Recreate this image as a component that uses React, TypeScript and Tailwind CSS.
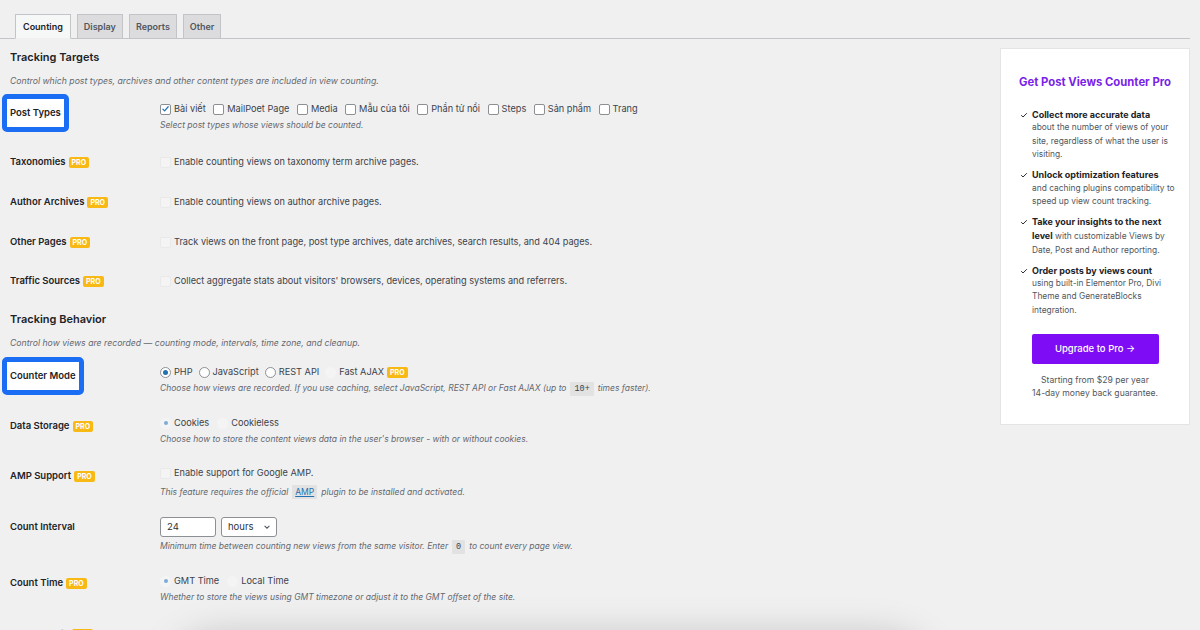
import type { ReactNode } from 'react';

const font = { fontFamily: 'Inter, "Noto Sans", sans-serif' };

const tabs = ['Counting', 'Display', 'Reports', 'Other'];

const postTypes = ['Bài viết', 'MailPoet Page', 'Media', 'Mẫu của tôi', 'Phần tử nổi', 'Steps', 'Sản phẩm', 'Trang'];

// block: the bold lead sits on its own line in the reference
const perks = [
  { strong: 'Collect more accurate data', rest: 'about the number of views of your site, regardless of what the user is visiting.', block: true },
  { strong: 'Unlock optimization features', rest: 'and caching plugins compatibility to speed up view count tracking.', block: true },
  { strong: 'Take your insights to the next level', rest: ' with customizable Views by Date, Post and Author reporting.', block: false },
  { strong: 'Order posts by views count', rest: 'using built-in Elementor Pro, Divi Theme and GenerateBlocks integration.', block: true }
];

function Pro() {
  return (
    <span className="ml-[3px] inline-block rounded-[2px] bg-[#f9b915] px-[3px] text-[7px] font-bold leading-[11px] text-white">
      PRO
    </span>
  );
}

function Checkbox({ checked, disabled }: { checked?: boolean; disabled?: boolean }) {
  if (disabled) {
    return <span className="inline-block size-[11px] shrink-0 rounded-[2px] border border-[#e9e9ea] bg-[#f4f4f5]" />;
  }
  return (
    <span className="inline-flex size-[11px] shrink-0 items-center justify-center rounded-[2px] border border-[#8c8f94] bg-white">
      {checked && (
        <svg viewBox="0 0 12 12" className="size-[10px]">
          <path d="M2.5 6.2l2.3 2.4L9.6 3" fill="none" stroke="#2271b1" strokeWidth="1.6" strokeLinecap="round" strokeLinejoin="round" />
        </svg>
      )}
    </span>
  );
}

function Radio({ checked, disabled }: { checked?: boolean; disabled?: boolean }) {
  if (disabled) {
    return (
      <span className="inline-flex size-[11px] shrink-0 items-center justify-center rounded-full bg-[#f4f4f5]">
        {checked && <span className="size-[4px] rounded-full bg-[#7eaad6]" />}
      </span>
    );
  }
  return (
    <span className="inline-flex size-[11px] shrink-0 items-center justify-center rounded-full border border-[#8c8f94] bg-white">
      {checked && <span className="size-[5px] rounded-full bg-[#2271b1]" />}
    </span>
  );
}

function Desc({ children }: { children: ReactNode }) {
  return <p className="mt-[3px] text-[8.5px] italic leading-[12px] text-[#646970]">{children}</p>;
}

function Code({ children }: { children: ReactNode }) {
  return (
    <code className="mx-[4px] rounded-[1px] bg-[#e2e2e3] px-[4px] py-[2px] font-['Liberation_Mono',monospace] text-[8.5px] not-italic text-[#3c434a]">
      {children}
    </code>
  );
}

function Label({ children, pro, boxed }: { children: ReactNode; pro?: boolean; boxed?: boolean }) {
  if (boxed) {
    return (
      <div className="-ml-[8px] -mt-[8px] flex w-fit rounded-[5px] border-[5px] border-[#1b6ef3] bg-white px-[3px] py-[7px] text-[9.5px] font-semibold leading-[14px] text-[#1d2327]">
        {children}
      </div>
    );
  }
  return (
    <div className="flex items-center text-[9.5px] font-semibold leading-[14px] text-[#1d2327]">
      {children}
      {pro && <Pro />}
    </div>
  );
}

function Row({ label, height, children }: { label: ReactNode; height: string; children: ReactNode }) {
  return (
    <div className={`grid grid-cols-[150px_1fr] items-start ${height}`}>
      <div>{label}</div>
      <div className="text-[9.2px] leading-[14px] text-[#3c434a]">{children}</div>
    </div>
  );
}

function Choice({ children, control }: { children: ReactNode; control: ReactNode }) {
  return (
    <span className="inline-flex items-center gap-[3px]">
      {control}
      <span>{children}</span>
    </span>
  );
}

export default function App() {
  return (
    <div style={font} className="relative h-[630px] w-[1200px] overflow-hidden bg-[#f0f0f1]">
      <nav className="mr-[10px] flex items-end gap-[6px] border-b border-[#c3c4c7] pl-[15px] pt-[14px]">
        {tabs.map((t, i) => (
          <div
            key={t}
            className={
              i === 0
                ? '-mb-px border border-b-[#f0f0f1] border-[#c3c4c7] bg-[#f6f7f7] px-[7px] text-[9px] font-semibold leading-[23px] text-[#1d2327]'
                : 'border border-b-0 border-[#c3c4c7] bg-[#dcdcde] px-[6px] text-[9px] font-semibold leading-[23px] text-[#50575e]'
            }
          >
            {t}
          </div>
        ))}
      </nav>

      <div className="flex pr-[10px]">
        <main className="flex-1 pl-[10px]">
          <h2 className="mt-[10px] text-[11px] font-semibold leading-[16px] text-[#1d2327]">Tracking Targets</h2>
          <p className="mt-[10px] text-[8.7px] italic leading-[12px] text-[#646970]">
            Control which post types, archives and other content types are included in view counting.
          </p>

          <div className="mt-[15px]">
            <Row height="h-[53px]" label={<Label boxed>Post Types</Label>}>
              <div className="flex items-center gap-[7.5px]">
                {postTypes.map((p, i) => (
                  <Choice key={p} control={<Checkbox checked={i === 0} />}>
                    {p}
                  </Choice>
                ))}
              </div>
              <Desc>Select post types whose views should be counted.</Desc>
            </Row>
            <Row height="h-[40px]" label={<Label pro>Taxonomies</Label>}>
              <Choice control={<Checkbox disabled />}>Enable counting views on taxonomy term archive pages.</Choice>
            </Row>
            <Row height="h-[40px]" label={<Label pro>Author Archives</Label>}>
              <Choice control={<Checkbox disabled />}>Enable counting views on author archive pages.</Choice>
            </Row>
            <Row height="h-[39px]" label={<Label pro>Other Pages</Label>}>
              <Choice control={<Checkbox disabled />}>
                Track views on the front page, post type archives, date archives, search results, and 404 pages.
              </Choice>
            </Row>
            <Row height="h-[37px]" label={<Label pro>Traffic Sources</Label>}>
              <Choice control={<Checkbox disabled />}>
                Collect aggregate stats about visitors' browsers, devices, operating systems and referrers.
              </Choice>
            </Row>
          </div>

          <h2 className="text-[11px] font-semibold leading-[16px] text-[#1d2327]">Tracking Behavior</h2>
          <p className="mt-[10px] text-[8.7px] italic leading-[12px] text-[#646970]">
            Control how views are recorded — counting mode, intervals, time zone, and cleanup.
          </p>

          <div className="mt-[16px]">
            <Row height="h-[51px]" label={<Label boxed>Counter Mode</Label>}>
              <div className="flex items-center gap-[6px]">
                <Choice control={<Radio checked />}>PHP</Choice>
                <Choice control={<Radio />}>JavaScript</Choice>
                <Choice control={<Radio />}>REST API</Choice>
                <Choice control={<Radio disabled />}>
                  Fast AJAX
                  <Pro />
                </Choice>
              </div>
              <Desc>
                Choose how views are recorded. If you use caching, select JavaScript, REST API or Fast AJAX (up to
                <Code>10+</Code>
                times faster).
              </Desc>
            </Row>
            <Row
              height="h-[50px]"
              label={
                <div className="pt-[3px]">
                  <Label pro>Data Storage</Label>
                </div>
              }
            >
              <div className="flex items-center gap-[8px]">
                <Choice control={<Radio checked disabled />}>Cookies</Choice>
                <Choice control={<Radio disabled />}>Cookieless</Choice>
              </div>
              <Desc>Choose how to store the content views data in the user's browser - with or without cookies.</Desc>
            </Row>
            <Row
              height="h-[51px]"
              label={
                <div className="pt-[3px]">
                  <Label pro>AMP Support</Label>
                </div>
              }
            >
              <Choice control={<Checkbox disabled />}>Enable support for Google AMP.</Choice>
              <Desc>
                This feature requires the official
                <span className="mx-[4px] bg-[#e2e2e3] px-[3px] py-[2px] not-italic text-[#2271b1] underline">AMP</span>
                plugin to be installed and activated.
              </Desc>
            </Row>
            <Row
              height="h-[57px]"
              label={
                <div className="pt-[3px]">
                  <Label>Count Interval</Label>
                </div>
              }
            >
              <div className="flex items-center gap-[5px]">
                <div className="h-[20px] w-[56px] rounded-[3px] border border-[#8c8f94] bg-white px-[6px] text-[9.5px] leading-[18px] text-[#2c3338]">
                  24
                </div>
                <div className="flex h-[20px] w-[56px] items-center justify-between rounded-[3px] border border-[#8c8f94] bg-white pl-[6px] pr-[5px] text-[9.5px] text-[#2c3338]">
                  <span>hours</span>
                  <svg viewBox="0 0 10 10" className="size-[8px]">
                    <path d="M2 3.5l3 3 3-3" fill="none" stroke="#50575e" strokeWidth="1.3" />
                  </svg>
                </div>
              </div>
              <Desc>
                Minimum time between counting new views from the same visitor. Enter
                <Code>0</Code>
                to count every page view.
              </Desc>
            </Row>
            <Row
              height="h-[53px]"
              label={
                <div className="pt-[2px]">
                  <Label pro>Count Time</Label>
                </div>
              }
            >
              <div className="flex items-center gap-[8px]">
                <Choice control={<Radio checked disabled />}>GMT Time</Choice>
                <Choice control={<Radio disabled />}>Local Time</Choice>
              </div>
              <Desc>Whether to store the views using GMT timezone or adjust it to the GMT offset of the site.</Desc>
            </Row>
            <Row height="h-[40px]" label={<Label pro>Exclude Bots</Label>}>
              <span />
            </Row>
          </div>
        </main>

        <aside className="mt-[9px] h-[377px] w-[190px] border border-[#e4e4e6] bg-white">
          <h3 className="mt-[25px] text-center text-[11.3px] font-bold leading-[16px] text-[#7a1fe8]">
            Get Post Views Counter Pro
          </h3>
          <ul className="mt-[18px] flex flex-col gap-[6.5px] pl-[19px] pr-[13px]">
            {perks.map((p) => (
              <li key={p.strong} className="flex gap-[4px] text-[8.4px] leading-[13.4px] text-[#50575e]">
                <svg viewBox="0 0 10 10" className="mt-[3px] size-[8px] shrink-0">
                  <path d="M1.5 5.2l2.3 2.3L8.5 2.8" fill="none" stroke="#1d2327" strokeWidth="1.2" />
                </svg>
                <span>
                  <strong className={`text-[9px] font-bold leading-[13.4px] text-[#1d2327] ${p.block ? 'block' : ''}`}>
                    {p.strong}
                  </strong>
                  {p.rest}
                </span>
              </li>
            ))}
          </ul>
          <div className="mt-[17px] flex justify-center">
            <div className="flex h-[30px] w-[127px] items-center justify-center rounded-[2px] bg-[#7e0cf5] text-[9.5px] font-medium text-white">
              Upgrade to Pro →
            </div>
          </div>
          <p className="mt-[10px] text-center text-[8.6px] leading-[13px] text-[#50575e]">
            Starting from $29 per year
            <br />
            14-day money back guarantee.
          </p>
        </aside>
      </div>

      <div className="pointer-events-none absolute left-[175px] top-[640px] h-[100px] w-[750px] rounded-[40px] bg-[#e9e9ea] shadow-[0_0_40px_rgba(0,0,0,0.25)]" />
    </div>
  );
}
